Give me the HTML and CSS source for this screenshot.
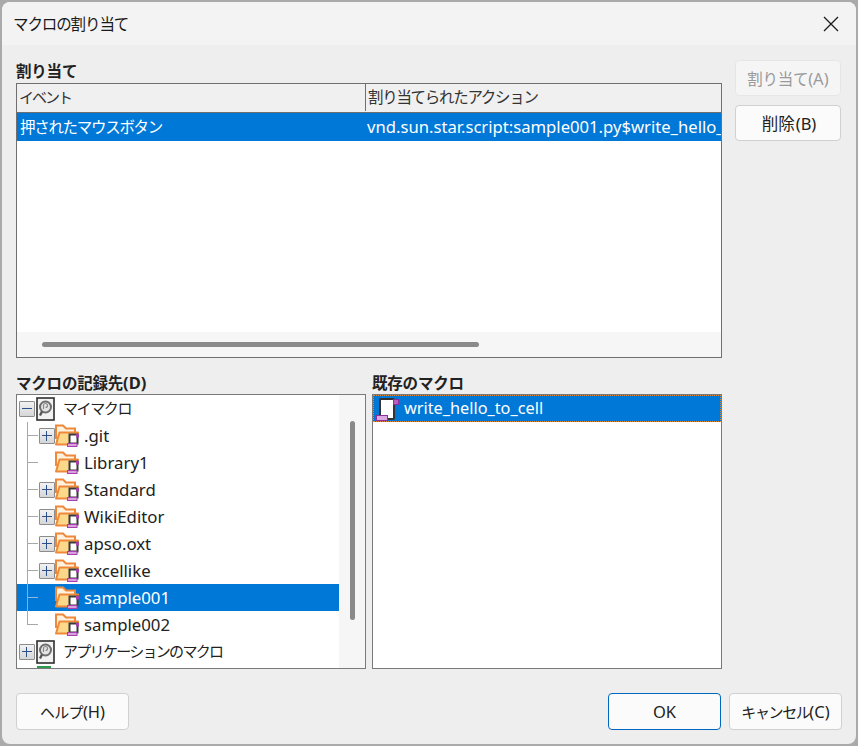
FILE: index.html
```html
<!DOCTYPE html>
<html lang="ja">
<head>
<meta charset="utf-8">
<title>マクロの割り当て</title>
<link rel="stylesheet" href="styles.css">
</head>
<body>
<svg class="defs" width="0" height="0" aria-hidden="true">
  <symbol id="folder" viewBox="0 0 24 23">
    <path d="M1 15V1.5h7l3 3h9v4" fill="#fff3e0" stroke="#f0883a" stroke-width="2"/>
    <path d="M4.5 8.5H23l-3 12H1z" fill="#fcd98a" stroke="#f0883a" stroke-width="2" stroke-linejoin="round"/>
    <rect x="14.5" y="10.5" width="8" height="9" fill="#fff" stroke="#3a3a3a" stroke-width="2"/>
    <rect x="21" y="10" width="3" height="3.5" fill="#a63fb0"/>
    <rect x="12.5" y="19.5" width="9.5" height="3" fill="#d9a0dc" stroke="#a63fb0"/>
  </symbol>
  <symbol id="macro" viewBox="0 0 19 24">
    <rect x="1" y="1" width="17" height="22" fill="#f2f2f2" stroke="#2e2e2e" stroke-width="1.6"/>
    <circle cx="9.5" cy="10" r="5.5" fill="#e4e4e4" stroke="#6e6e6e" stroke-width="2"/>
    <path d="M7.5 12V8.5a2 2 0 1 1 2 2" fill="none" stroke="#8a8a8a" stroke-width="1.2"/>
    <path d="M6 14.5l-2 4" stroke="#555" stroke-width="2.4"/>
  </symbol>
  <symbol id="script" viewBox="0 0 23 24">
    <rect x="4" y="2" width="14" height="20" rx="1" fill="#fff" stroke="#333" stroke-width="2"/>
    <rect x="17.5" y="2.5" width="5" height="5" fill="#b65fc0" stroke="#8a2f9c"/>
    <rect x="0.5" y="18.5" width="11" height="5" fill="#dca6e0" stroke="#8a2f9c"/>
  </symbol>
</svg>
<div class="desk">
  <div class="dialog">
    <header class="titlebar">
      <span class="title">マクロの割り当て</span>
      <svg class="close" width="16" height="16" viewBox="0 0 16 16"><path d="M1 1l14 14M15 1L1 15" stroke="#1a1a1a" stroke-width="1.3" fill="none"/></svg>
    </header>
    <main class="content">
      <section class="upper">
        <div class="upper-left">
          <div class="label">割り当て</div>
          <div class="table">
            <div class="thead">
              <div class="col-a head-cell head-event">イベント</div>
              <div class="col-b head-cell">割り当てられたアクション</div>
            </div>
            <div class="tbody">
              <div class="trow selected">
                <div class="col-a cell">押されたマウスボタン</div>
                <div class="col-b cell cell-url">vnd.sun.star.script:sample001.py$write_hello_to_cell</div>
              </div>
            </div>
            <div class="hscroll"><div class="hthumb"></div></div>
          </div>
        </div>
        <div class="side">
          <button class="btn disabled"><span class="cjk-a">割り当て</span><span class="lt">(A)</span></button>
          <button class="btn"><span class="cjk-b">削除</span><span class="lt">(B)</span></button>
        </div>
      </section>
      <section class="lower">
        <div class="pane">
          <div class="label">マクロの記録先<span class="lt">(D)</span></div>
          <div class="box tree-box">
            <div class="tree">
              <div class="row root"><span class="exp minus"></span><svg class="macro-ico"><use href="#macro"/></svg><span class="rlabel">マイマクロ</span></div>
              <div class="children">
                <div class="row child"><span class="exp plus"></span><svg class="folder-ico"><use href="#folder"/></svg><span>.git</span></div>
                <div class="row child"><span class="exp none"></span><svg class="folder-ico"><use href="#folder"/></svg><span>Library1</span></div>
                <div class="row child"><span class="exp plus"></span><svg class="folder-ico"><use href="#folder"/></svg><span>Standard</span></div>
                <div class="row child"><span class="exp plus"></span><svg class="folder-ico"><use href="#folder"/></svg><span>WikiEditor</span></div>
                <div class="row child"><span class="exp plus"></span><svg class="folder-ico"><use href="#folder"/></svg><span>apso.oxt</span></div>
                <div class="row child"><span class="exp plus"></span><svg class="folder-ico"><use href="#folder"/></svg><span>excellike</span></div>
                <div class="row child selected"><span class="exp none"></span><svg class="folder-ico"><use href="#folder"/></svg><span>sample001</span></div>
                <div class="row child"><span class="exp none"></span><svg class="folder-ico"><use href="#folder"/></svg><span>sample002</span></div>
              </div>
              <div class="row root"><span class="exp plus"></span><svg class="macro-ico"><use href="#macro"/></svg><span class="rlabel rlabel-long">アプリケーションのマクロ</span></div>
              <div class="row root"><span class="exp none"></span><span class="doc-ico"></span></div>
            </div>
            <div class="vscroll"><div class="vthumb"></div></div>
          </div>
        </div>
        <div class="pane">
          <div class="label">既存のマクロ</div>
          <div class="box list-box">
            <div class="list-row selected"><svg class="script-ico"><use href="#script"/></svg><span>write_hello_to_cell</span></div>
          </div>
        </div>
      </section>
      <footer class="footer">
        <button class="btn wide"><span class="cjk-h">ヘルプ</span><span class="lt">(H)</span></button>
        <div class="footer-right">
          <button class="btn wide primary ok">OK</button>
          <button class="btn wide"><span class="cjk-c">キャンセル</span><span class="lt">(C)</span></button>
        </div>
      </footer>
    </main>
  </div>
</div>
</body>
</html>
```
FILE: styles.css
```css
* { box-sizing: border-box; }
html, body { margin: 0; padding: 0; height: 100%; }
body {
  font-family: "Noto Sans", "Noto Sans CJK JP", sans-serif;
  font-size: 16.8px;
  color: #222;
  overflow: hidden;
}
.defs { position: absolute; }
.lt { font-size: 16.5px; letter-spacing: 0; }
.desk {
  width: 858px;
  height: 746px;
  background: #aaaaaa;
  padding: 2px;
}
.dialog {
  height: 742px;
  background: #eeeeee;
  border-radius: 8px;
  overflow: hidden;
  display: flex;
  flex-direction: column;
}
.titlebar {
  height: 43px;
  flex: none;
  background: #f3f3f3;
  display: flex;
  align-items: center;
  justify-content: space-between;
  padding: 0 17px 0 11px;
}
.title { font-size: 15.5px; letter-spacing: -1.1px; color: #1a1a1a; }
.close { display: block; margin-top: 1px; }
.content { padding: 16px 14px 0 14px; flex: 1; }
.upper { display: flex; gap: 13px; }
.upper-left { width: 706px; }
.label { height: 22px; line-height: 20px; font-weight: 700; font-size: 15.5px; letter-spacing: -0.2px; color: #222; }
.table {
  height: 275px;
  border: 1px solid #6f6f6f;
  background: #fff;
  display: flex;
  flex-direction: column;
}
.thead {
  height: 29px;
  flex: none;
  display: flex;
  background: #f0f0f0;
  border-bottom: 1px solid #6f6f6f;
}
.col-a { width: 349px; flex: none; }
.col-b { flex: 1; min-width: 0; }
.head-cell { line-height: 27px; padding-left: 2px; font-size: 15.5px; letter-spacing: -1.3px; color: #333; height: 27px; }
.head-cell.col-a { border-right: 1px solid #6f6f6f; }
.head-event { font-size: 15px; letter-spacing: -2px; }
.tbody { flex: 1; min-height: 0; }
.trow { display: flex; height: 28px; line-height: 28px; }
.cell { padding-left: 3px; white-space: nowrap; overflow: hidden; font-size: 15.5px; letter-spacing: -1.3px; }
.cell-url { font-size: 16.65px; padding-left: 1px; letter-spacing: 0; }
.selected { background: #0078d7; color: #fff; }
.hscroll {
  height: 25px;
  flex: none;
  background: #f6f6f6;
  padding: 10px 0 0 25px;
}
.hthumb { width: 437px; height: 5px; background: #8a8a8a; border-radius: 3px; }
.side { width: 106px; display: flex; flex-direction: column; gap: 9px; margin-top: -1px; }
.btn {
  font: inherit;
  font-size: 15.5px;
  height: 36px;
  width: 106px;
  padding: 0;
  background: #fbfbfb;
  border: 1px solid #d0d0d0;
  border-radius: 4px;
  color: #222;
}
.cjk-a { letter-spacing: -0.3px; }
.cjk-b { font-size: 16.5px; margin: 0 1px 0 2px; }
.cjk-h { font-size: 15px; letter-spacing: -0.7px; }
.cjk-c { font-size: 15px; letter-spacing: -1.4px; }
.btn.disabled { background: #f5f5f5; border-color: #e6e6e6; color: #9a9a9a; }
.btn.wide { width: 113px; height: 37px; }
.btn.primary { border-color: #0067c0; }
.btn.ok { font-size: 16.5px; }
.lower { display: flex; gap: 6px; margin-top: 15px; width: 706px; }
.pane { width: 350px; }
.pane .label { height: 21px; }
.box { height: 275px; border: 1px solid #7a7a7a; background: #fff; overflow: hidden; }
.tree-box { display: flex; }
.tree { flex: 1; min-width: 0; overflow: hidden; }
.row {
  position: relative;
  height: 27px;
  display: flex;
  align-items: center;
  white-space: nowrap;
  padding-left: 3px;
  line-height: 25px;
}
.root { padding-left: 2px; }
.rlabel { margin-left: 8px; font-size: 15px; letter-spacing: -1.4px; }
.rlabel-long { letter-spacing: -1.7px; }
.exp { width: 16px; height: 16px; flex: none; position: relative; margin-right: 1px; }
.child .exp { margin-right: 0; }
.plus, .minus {
  background: linear-gradient(#f2f2f2, #d6d6d6);
  border: 1px solid #8c8c8c;
  border-radius: 1px;
}
.plus::before, .minus::before {
  content: "";
  position: absolute;
  left: 2px;
  right: 2px;
  top: 6px;
  height: 1px;
  background: #2c4f8c;
}
.plus::after {
  content: "";
  position: absolute;
  top: 2px;
  bottom: 2px;
  left: 6px;
  width: 1px;
  background: #2c4f8c;
}
.macro-ico { width: 19px; height: 24px; flex: none; }
.doc-ico { width: 14px; height: 24px; background: linear-gradient(#2e9a4e 2px, transparent 2px); margin: 1px 0 0 1px; flex: none; align-self: flex-start; }
.children { position: relative; }
.children::before {
  content: "";
  position: absolute;
  left: 10px;
  top: 0;
  bottom: 13px;
  width: 1px;
  background: #a8a8a8;
  z-index: 1;
}
.child { padding-left: 22px; }
.child::before {
  content: "";
  position: absolute;
  left: 10px;
  top: 13px;
  width: 11px;
  height: 1px;
  background: #a8a8a8;
}
.child.selected::before { background: #8fb8dc; }
.child .exp.plus { z-index: 1; }
.folder-ico { width: 24px; height: 23px; flex: none; margin: 0 5px 0 0; }
.vscroll { width: 26px; flex: none; background: #f6f6f6; padding: 26px 0 0 11px; }
.vthumb { width: 5px; height: 199px; background: #8a8a8a; border-radius: 3px; }
.list-row {
  height: 27px;
  display: flex;
  align-items: center;
  padding-left: 3px;
  outline: 1px dotted #e08a3c;
  outline-offset: -1px;
  font-size: 16.3px;
  line-height: 25px;
}
.script-ico { width: 23px; height: 24px; flex: none; margin-right: 5px; }
.footer { display: flex; justify-content: space-between; margin-top: 24px; }
.footer-right { display: flex; gap: 8px; }
```
